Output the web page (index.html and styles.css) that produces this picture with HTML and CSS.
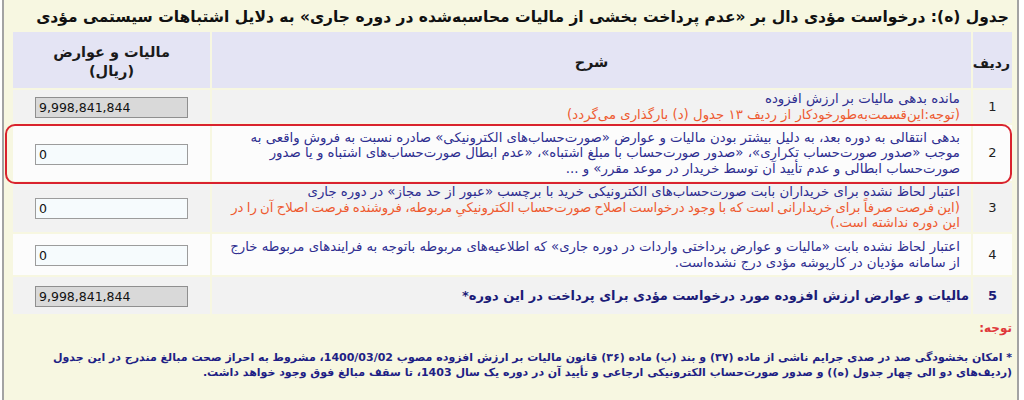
FILE: index.html
```html
<!DOCTYPE html>
<html lang="fa">
<head>
<meta charset="utf-8">
<link rel="stylesheet" href="styles.css">
</head>
<body>
<div class="topbar"></div>
<div class="frame">
  <div class="title" dir="rtl">جدول (ه): درخواست مؤدی دال بر «عدم پرداخت بخشی از مالیات محاسبه‌شده در دوره جاری» به دلایل اشتباهات سیستمی مؤدی</div>
  <div class="grid" dir="rtl">
    <div class="h h-num">ردیف</div>
    <div class="h h-desc">شرح</div>
    <div class="h h-amt">مالیات و عوارض<br>(ریال)</div>

    <div class="c num odd">1</div>
    <div class="c desc odd"><div class="txt"><span class="navy">مانده بدهی مالیات بر ارزش افزوده</span><br><span class="orange">(توجه:این‌قسمت‌به‌طورخودکار از ردیف ۱۳ جدول (د) بارگذاری می‌گردد)</span></div></div>
    <div class="c amt odd"><input class="box ro" dir="ltr" value="9,998,841,844" readonly></div>

    <div class="c num even">2</div>
    <div class="c desc even"><div class="txt navy">بدهی انتقالی به دوره بعد، به دلیل بیشتر بودن مالیات و عوارض «صورت‌حساب‌های الکترونیکی» صادره نسبت به فروش واقعی به<br>موجب «صدور صورت‌حساب تکراری»، «صدور صورت‌حساب با مبلغ اشتباه»، «عدم ابطال صورت‌حساب‌های اشتباه و یا صدور<br>صورت‌حساب ابطالی و عدم تأیید آن توسط خریدار در موعد مقرر» و ...</div></div>
    <div class="c amt even"><input class="box" dir="ltr" value="0"></div>

    <div class="c num odd">3</div>
    <div class="c desc odd"><div class="txt"><span class="navy">اعتبار لحاظ نشده برای خریداران بابت صورت‌حساب‌های الکترونیکی خرید با برچسب «عبور از حد مجاز» در دوره جاری</span><br><span class="orange tight">(این فرصت صرفاً برای خریدارانی است که با وجود درخواست اصلاح صورت‌حساب الکترونیکیِ مربوطه، فروشنده فرصت اصلاح آن را در</span><br><span class="orange">این دوره نداشته است.)</span></div></div>
    <div class="c amt odd"><input class="box" dir="ltr" value="0"></div>

    <div class="c num even">4</div>
    <div class="c desc even"><div class="txt navy">اعتبار لحاظ نشده بابت «مالیات و عوارض پرداختی واردات در دوره جاری» که اطلاعیه‌های مربوطه باتوجه به فرایندهای مربوطه خارج<br>از سامانه مؤدیان در کارپوشه مؤدی درج نشده‌است.</div></div>
    <div class="c amt even"><input class="box" dir="ltr" value="0"></div>

    <div class="c num odd total">5</div>
    <div class="c desc odd total"><div class="txt">مالیات و عوارض ارزش افزوده مورد درخواست مؤدی برای پرداخت در این دوره*</div></div>
    <div class="c amt odd"><input class="box ro" dir="ltr" value="9,998,841,844" readonly></div>
  </div>
  <div class="notes" dir="rtl">
    <div class="note-label">توجه:</div>
    <p class="note-text">* امکان بخشودگی صد در صدی جرایم ناشی از ماده (۳۷) و بند (ب) ماده (۳۶) قانون مالیات بر ارزش افزوده مصوب 1400/03/02، مشروط به احراز صحت مبالغ مندرج در این جدول<br>(ردیف‌های دو الی چهار جدول (ه)) و صدور صورت‌حساب الکترونیکی ارجاعی و تأیید آن در دوره یک سال 1403، تا سقف مبالغ فوق وجود خواهد داشت.</p>
  </div>
  <div class="highlight"></div>
</div>
</body>
</html>
```

FILE: styles.css
```css
html, body {
  margin: 0;
  padding: 0;
  background: #ffffff;
  font-family: "DejaVu Sans", sans-serif;
}

.topbar {
  position: absolute;
  left: 50px;
  top: 0;
  width: 155px;
  height: 2px;
  background: #a8a8a8;
}

.frame {
  position: relative;
  margin-left: 2px;
  width: 1017px;
  height: 400px;
  border-left: 2px solid #a3a3a3;
  border-right: 2px solid #a3a3a3;
  background: #f7f7e1;
  padding-top: 4px;
  box-sizing: border-box;
}

.title {
  height: 26px;
  line-height: 27px;
  padding-right: 8px;
  font-size: 15.5px;
  font-weight: bold;
  color: #111111;
  white-space: nowrap;
}

.grid {
  display: grid;
  grid-template-columns: 39px 759px 197px;
  grid-template-rows: 56px 33px 56px 49px 41px 37px;
  gap: 2px;
  margin: 2px 5px 0 9px;
}

.h {
  background: #e4e4f4;
  color: #1a1a1a;
  font-weight: bold;
  font-size: 14.5px;
  display: flex;
  align-items: center;
  justify-content: center;
  text-align: center;
  line-height: 19px;
  padding-top: 4px;
}

.h-num {
  justify-content: flex-start;
  padding-right: 2px;
  padding-top: 6px;
  font-size: 14px;
}

.c {
  display: flex;
  align-items: center;
  font-size: 13.3px;
  line-height: 15.5px;
}

.odd { background: #f2f2f2; }
.even { background: #fcfcfc; }

.num {
  justify-content: center;
  color: #222222;
  font-size: 13px;
}

.desc {
  justify-content: flex-start;
  padding-right: 11px;
}

.txt {
  white-space: nowrap;
}

.navy { color: #2e2e90; }
.orange { color: #ee5a30; }
.tight { word-spacing: -1px; }

.desc.total {
  color: #1c1c78;
  font-weight: bold;
  font-size: 13px;
  padding-right: 2px;
}

.num.total {
  color: #1c1c78;
  font-weight: bold;
}

.amt {
  justify-content: center;
}

.box {
  width: 153px;
  height: 21px;
  box-sizing: border-box;
  border: 1px solid #9c9c9c;
  background: #f6fbfd;
  font-family: "DejaVu Sans", sans-serif;
  font-size: 12.5px;
  color: #111111;
  padding: 0 3px;
  margin: 2px 0 0 0;
  text-align: left;
}

.box.ro {
  background: #d9d9d9;
  border-color: #8f8f8f;
}

.notes {
  padding: 6px 5px 0 8px;
}

.note-label {
  color: #e0393b;
  font-size: 12px;
  font-weight: bold;
  line-height: 16px;
}

.note-text {
  margin: 14px 0 0 0;
  color: #1f1f85;
  font-size: 11px;
  font-weight: bold;
  line-height: 15px;
  white-space: nowrap;
}

.highlight {
  position: absolute;
  left: 1px;
  top: 124px;
  width: 1007px;
  height: 60px;
  box-sizing: border-box;
  border: 2px solid #d9232e;
  border-radius: 10px;
  pointer-events: none;
}
```
